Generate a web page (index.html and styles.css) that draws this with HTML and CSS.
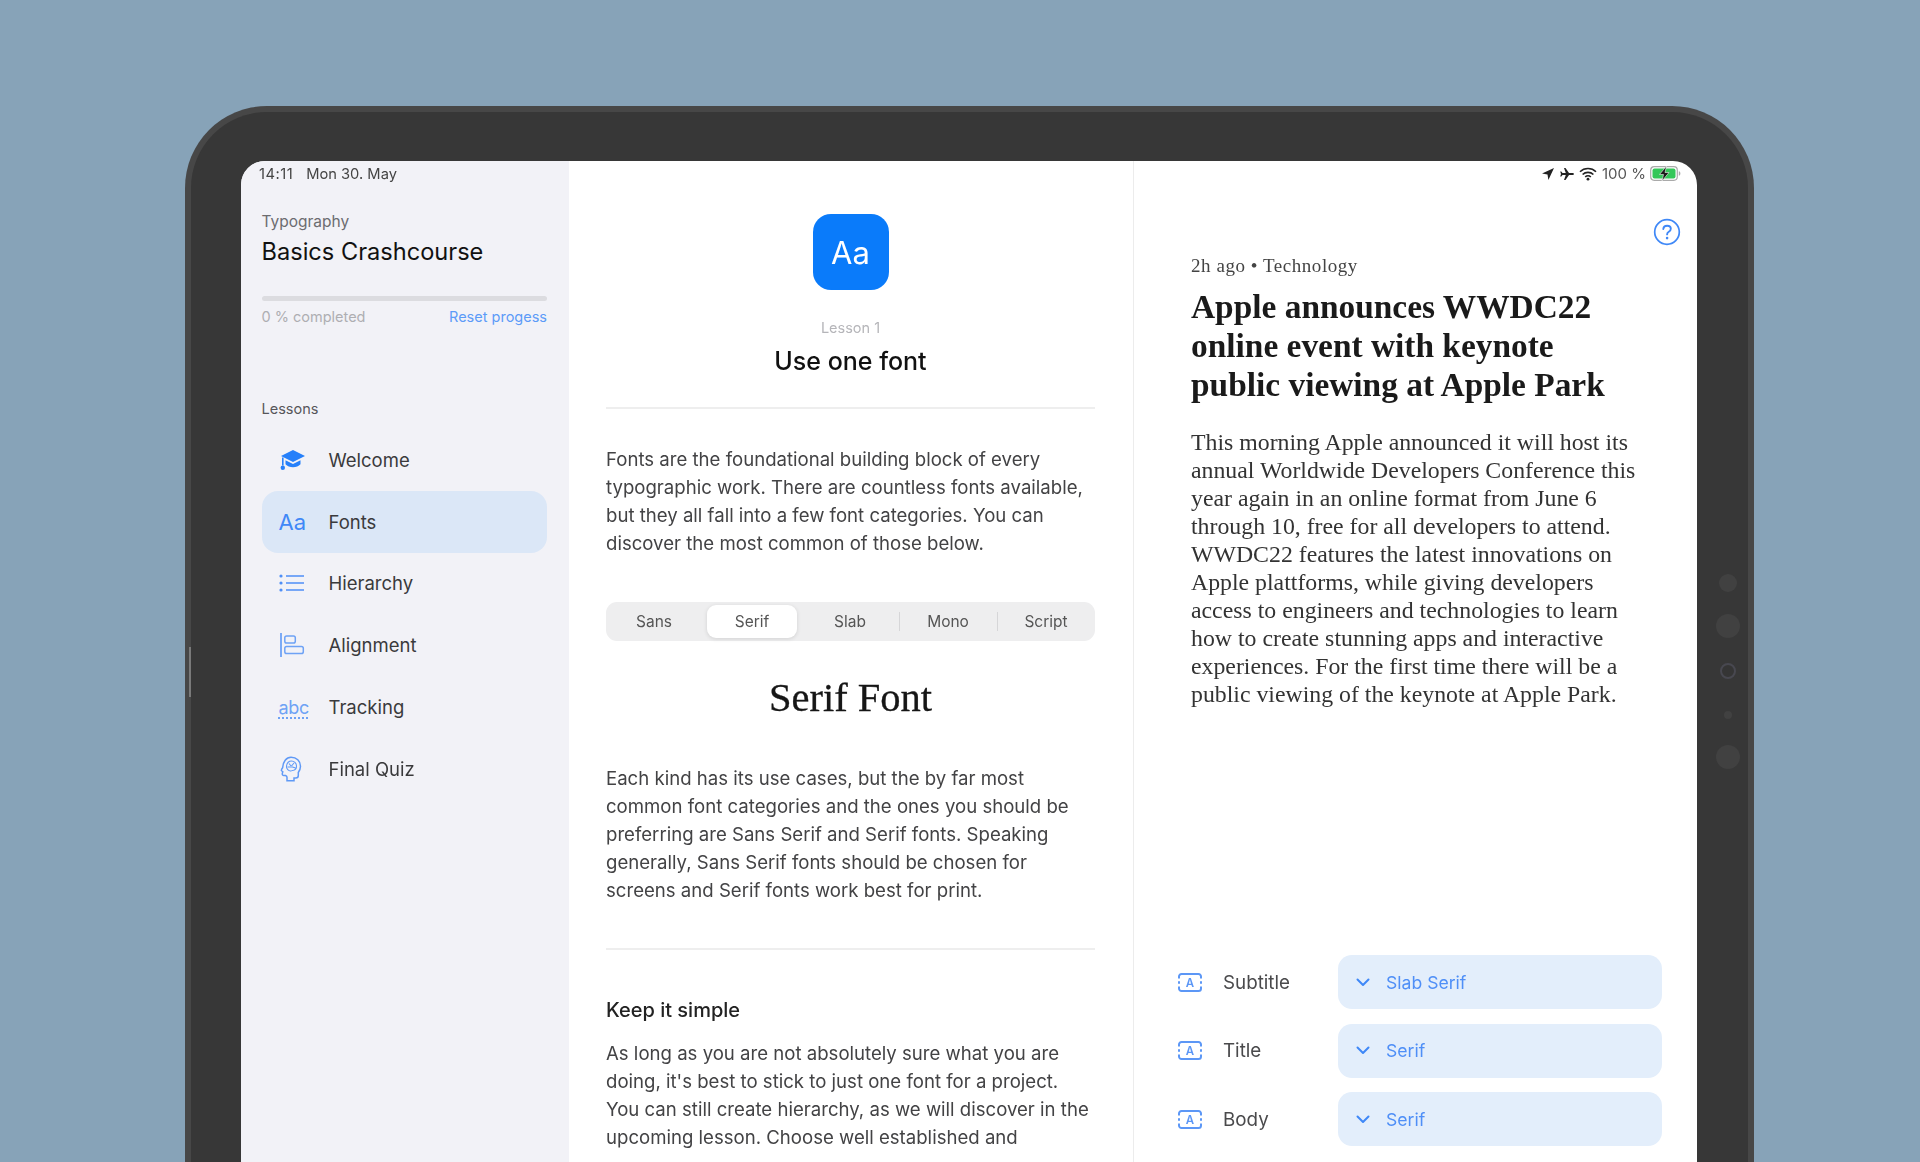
FILE: index.html
```html
<!DOCTYPE html>
<html lang="en">
<head>
<meta charset="utf-8">
<title>Typography Basics Crashcourse</title>
<link rel="stylesheet" href="styles.css">
</head>
<body>
<div class="device">
  <span class="edge-btn"></span>
  <div class="sensors">
    <span class="sensor s18"></span>
    <span class="sensor s24"></span>
    <span class="sensor s16 ring"></span>
    <span class="sensor s8"></span>
    <span class="sensor s24"></span>
  </div>
  <div class="screen">
    <div class="status">
      <div class="status-left"><span class="st-time">14:11</span><span>Mon 30. May</span></div>
      <div class="status-right">
        <svg class="st-ico" viewBox="0 0 14 14" width="14" height="14"><path d="M13 1 1 6.500l5.500.9.9 5.600z" fill="#222"/></svg>
        <svg class="st-ico" viewBox="0 0 16 14" width="16" height="14"><path d="M15 7c0-.7-1-1-2-1h-3L6.500 1H5l1.800 5H3.500L2.300 4.500H1.200L2 7l-.8 2.500h1.100L3.500 8h3.300L5 13h1.500L10 8h3c1 0 2-.3 2-1z" fill="#222"/></svg>
        <svg class="st-ico" viewBox="0 0 18 14" width="18" height="14"><g fill="none" stroke="#222" stroke-width="1.600"><path d="M1 4.800a11.500 11.500 0 0 1 16 0"/><path d="M3.600 7.500a7.800 7.800 0 0 1 10.800 0"/><path d="M6.200 10a4 4 0 0 1 5.600 0"/></g><circle cx="9" cy="12.200" r="1.400" fill="#222"/></svg>
        <span class="st-pct">100 %</span>
        <svg class="st-batt" viewBox="0 0 32 15" width="32" height="15"><rect x=".7" y=".7" width="26.600" height="13.600" rx="3.500" fill="none" stroke="#aaa" stroke-width="1.200"/><rect x="2.500" y="2.500" width="23" height="10" rx="2" fill="#34c759"/><path d="M28.800 5.200c1 .3 1.600 1.200 1.600 2.300s-.6 2-1.600 2.300z" fill="#aaa"/><path d="M16.500 0 9.500 8.500h4L12 15l7-8.500h-4z" fill="#1a1a1a" stroke="#f3f5f3" stroke-width=".6"/></svg>
      </div>
    </div>

    <aside class="sidebar">
      <div class="eyebrow">Typography</div>
      <h1 class="course">Basics Crashcourse</h1>
      <div class="track"></div>
      <div class="progress-row"><span class="done">0 % completed</span><span class="reset">Reset progess</span></div>
      <div class="lessons-label">Lessons</div>
      <nav class="lessons">
        <div class="lesson">
          <span class="lesson-ico"><svg viewBox="0 0 26 22" width="26" height="22"><path d="M14 1 2 7l12 6 12-6z" fill="#2680fa"/><path d="M6.500 11.200v4c1.800 2 4.500 3 7.500 3s5.700-1 7.500-3v-4L14 15z" fill="#2680fa"/><path d="M3.800 8.500v8" stroke="#2680fa" stroke-width="1.600"/><circle cx="3.800" cy="18.800" r="2.200" fill="#2680fa"/></svg></span>
          <span>Welcome</span>
        </div>
        <div class="lesson active">
          <span class="lesson-ico aa">Aa</span>
          <span>Fonts</span>
        </div>
        <div class="lesson">
          <span class="lesson-ico"><svg viewBox="0 0 26 20" width="26" height="20"><g fill="#4f8ff7"><circle cx="2" cy="3" r="1.600"/><circle cx="2" cy="10" r="1.600"/><circle cx="2" cy="17" r="1.600"/></g><path d="M7 3h18M7 10h18M7 17h18" stroke="#4f8ff7" stroke-width="1.600"/></svg></span>
          <span>Hierarchy</span>
        </div>
        <div class="lesson">
          <span class="lesson-ico"><svg viewBox="0 0 26 26" width="26" height="26"><path d="M2 1v24" stroke="#6ea2f5" stroke-width="1.800"/><rect x="5.800" y="4" width="10.500" height="7" rx="1.800" fill="none" stroke="#6ea2f5" stroke-width="1.500"/><rect x="5.800" y="14.500" width="18.500" height="7" rx="1.800" fill="none" stroke="#6ea2f5" stroke-width="1.500"/></svg></span>
          <span>Alignment</span>
        </div>
        <div class="lesson">
          <span class="lesson-ico"><span class="abc">abc</span></span>
          <span>Tracking</span>
        </div>
        <div class="lesson">
          <span class="lesson-ico"><svg viewBox="0 0 24 26" width="24" height="26"><path d="M12 1.200c5.500 0 9.500 3.800 9.500 9 0 2.800-1 4.500-2.200 6.300v3c0 1.500-1 2.500-2.500 2.500h-1.800v2.800H8v-3.500c0-1-.6-1.500-1.500-1.800H4.800c-1.100 0-1.800-.9-1.500-2l.5-1.800-1-.7c-.6-.4-.6-1-.2-1.600l1-1.700c.3-6 3.800-10.500 8.400-10.500z" fill="none" stroke="#5f99f6" stroke-width="1.500"/><path d="M7.500 10c.5-3 2.500-5 5-5s5 2 5 5-1.500 4-3 4.200c-1.500 0-1.500 1-3 .8s-4.500-2-4-5zM10 7.500l2 2.500m3-3-2.500 3m-4 1h6m-1 0 3 1" fill="none" stroke="#5f99f6" stroke-width="1.100"/></svg></span>
          <span>Final Quiz</span>
        </div>
      </nav>
    </aside>

    <main class="lesson-pane">
      <div class="hero-icon">Aa</div>
      <div class="lesson-no">Lesson 1</div>
      <h2 class="lesson-title">Use one font</h2>
      <hr class="rule rule-top">
      <p class="copy copy-a">Fonts are the foundational building block of every<br>typographic work. There are countless fonts available,<br>but they all fall into a few font categories. You can<br>discover the most common of those below.</p>
      <div class="segments">
        <div class="seg-grid">
          <span class="seg">Sans</span>
          <span class="seg selected">Serif</span>
          <span class="seg">Slab</span>
          <span class="seg sep">Mono</span>
          <span class="seg sep">Script</span>
        </div>
      </div>
      <h3 class="font-name">Serif Font</h3>
      <p class="copy copy-b">Each kind has its use cases, but the by far most<br>common font categories and the ones you should be<br>preferring are Sans Serif and Serif fonts. Speaking<br>generally, Sans Serif fonts should be chosen for<br>screens and Serif fonts work best for print.</p>
      <hr class="rule rule-mid">
      <h4 class="subhead">Keep it simple</h4>
      <p class="copy copy-c">As long as you are not absolutely sure what you are<br>doing, it's best to stick to just one font for a project.<br>You can still create hierarchy, as we will discover in the<br>upcoming lesson. Choose well established and</p>
    </main>

    <section class="preview">
      <svg class="help" viewBox="0 0 28 28" width="28" height="28"><circle cx="14" cy="14" r="12.300" fill="none" stroke="#3f88f7" stroke-width="1.700"/><path d="M10.300 11c.2-2.100 1.800-3.300 3.800-3.300 2.100 0 3.700 1.300 3.700 3.100 0 1.500-.9 2.300-2 3-1.100.7-1.700 1.200-1.700 2.600" fill="none" stroke="#3f88f7" stroke-width="1.900" stroke-linecap="round"/><circle cx="14.100" cy="20.100" r="1.300" fill="#3f88f7"/></svg>
      <article class="article">
        <div class="meta">2h ago • Technology</div>
        <h2 class="headline">Apple announces WWDC22<br>online event with keynote<br>public viewing at Apple Park</h2>
        <p class="article-body">This morning Apple announced it will host its<br>annual Worldwide Developers Conference this<br>year again in an online format from June 6<br>through 10, free for all developers to attend.<br>WWDC22 features the latest innovations on<br>Apple plattforms, while giving developers<br>access to engineers and technologies to learn<br>how to create stunning apps and interactive<br>experiences. For the first time there will be a<br>public viewing of the keynote at Apple Park.</p>
      </article>
      <div class="controls">
        <div class="control">
          <span class="tb"><svg viewBox="0 0 24 19" width="24" height="19"><path d="M1 5.500V3.500A2.500 2.500 0 0 1 3.500 1h17A2.500 2.500 0 0 1 23 3.500v2M1 13.500v2A2.500 2.500 0 0 0 3.500 18h17a2.500 2.500 0 0 0 2.500-2.500v-2M1 8.300v2.400M23 8.300v2.400" fill="none" stroke="#5c97f6" stroke-width="2"/><text x="12" y="13.800" text-anchor="middle" class="tb-a">A</text></svg></span>
          <span class="ctl-label">Subtitle</span>
          <div class="select"><svg viewBox="0 0 14 9" width="14" height="9"><path d="M1.500 1.500 7 7l5.500-5.500" fill="none" stroke="#3f88f7" stroke-width="2" stroke-linecap="round" stroke-linejoin="round"/></svg><span>Slab Serif</span></div>
        </div>
        <div class="control">
          <span class="tb"><svg viewBox="0 0 24 19" width="24" height="19"><path d="M1 5.500V3.500A2.500 2.500 0 0 1 3.500 1h17A2.500 2.500 0 0 1 23 3.500v2M1 13.500v2A2.500 2.500 0 0 0 3.500 18h17a2.500 2.500 0 0 0 2.500-2.500v-2M1 8.300v2.400M23 8.300v2.400" fill="none" stroke="#5c97f6" stroke-width="2"/><text x="12" y="13.800" text-anchor="middle" class="tb-a">A</text></svg></span>
          <span class="ctl-label">Title</span>
          <div class="select"><svg viewBox="0 0 14 9" width="14" height="9"><path d="M1.500 1.500 7 7l5.500-5.500" fill="none" stroke="#3f88f7" stroke-width="2" stroke-linecap="round" stroke-linejoin="round"/></svg><span>Serif</span></div>
        </div>
        <div class="control">
          <span class="tb"><svg viewBox="0 0 24 19" width="24" height="19"><path d="M1 5.500V3.500A2.500 2.500 0 0 1 3.500 1h17A2.500 2.500 0 0 1 23 3.500v2M1 13.500v2A2.500 2.500 0 0 0 3.500 18h17a2.500 2.500 0 0 0 2.500-2.500v-2M1 8.300v2.400M23 8.300v2.400" fill="none" stroke="#5c97f6" stroke-width="2"/><text x="12" y="13.800" text-anchor="middle" class="tb-a">A</text></svg></span>
          <span class="ctl-label">Body</span>
          <div class="select"><svg viewBox="0 0 14 9" width="14" height="9"><path d="M1.500 1.500 7 7l5.500-5.500" fill="none" stroke="#3f88f7" stroke-width="2" stroke-linecap="round" stroke-linejoin="round"/></svg><span>Serif</span></div>
        </div>
      </div>
    </section>
  </div>
</div>
</body>
</html>
```

FILE: styles.css
```css
* { box-sizing: border-box; }
html, body { margin: 0; height: 100%; }
body {
  background: #87a3b8;
  overflow: hidden;
  font-family: Inter, "Liberation Sans", sans-serif;
  padding-top: 106px;
}
h1, h2, h3, h4, p { margin: 0; font-weight: 400; }

.device {
  position: relative;
  width: 1569px;
  height: 1056px;
  margin-left: 185px;
  background: #373737;
  border: 6px solid #474747;
  border-bottom: 0;
  border-radius: 82px 82px 0 0;
  padding: 49px 51px 0 50px;
}
.edge-btn {
  position: absolute;
  left: -2px;
  top: 535px;
  width: 2px;
  height: 50px;
  background: #7a7a7a;
}
.sensors {
  position: absolute;
  right: 8px;
  top: 462px;
  width: 24px;
  display: flex;
  flex-direction: column;
  align-items: center;
}
.sensor { display: block; border-radius: 50%; background: #414141; }
.s18 { width: 18px; height: 18px; margin-bottom: 22px; }
.s24 { width: 24px; height: 24px; }
.s16 { width: 16px; height: 16px; margin: 25px 0 32px; }
.s8 { width: 8px; height: 8px; margin-bottom: 26px; }
.ring { background: #353535; border: 2px solid #484850; }

.screen {
  position: relative;
  height: 1001px;
  display: grid;
  grid-template-columns: 328px 565px 1fr;
  background: #fff;
  border-radius: 24px 24px 0 0;
  overflow: hidden;
  filter: blur(.4px);
}

.status {
  position: absolute;
  left: 0; right: 0; top: 0;
  height: 25px;
  padding: 0 15px 0 18px;
  display: flex;
  justify-content: space-between;
  align-items: center;
  font-size: 14.700px;
  color: #444;
}
.status-left { display: flex; gap: 13px; }
.st-time { letter-spacing: .5px; }
.status-right { display: flex; align-items: center; gap: 4px; }
.st-pct { margin: 0 0 0 1px; color: #555; font-size: 15px; }

.sidebar { background: #f2f2f7; padding: 51px 22px 0 20.500px; }
.eyebrow { font-size: 15.500px; line-height: 20px; color: #6c6c70; }
.course { font-size: 23.600px; line-height: 32px; margin-top: 4px; color: #111; font-weight: 400; }
.track { height: 5px; margin-top: 28px; border-radius: 3px; background: #dcdce0; }
.progress-row { display: flex; justify-content: space-between; font-size: 14.500px; line-height: 20px; margin-top: 6px; }
.done { color: #aeaeb2; }
.reset { color: #5c9bf8; }
.lessons-label { margin-top: 72px; font-size: 14.500px; line-height: 20px; color: #56565a; }
.lessons { margin-top: 10px; display: flex; flex-direction: column; }
.lesson {
  height: 61.800px;
  display: flex;
  align-items: center;
  font-size: 18.500px;
  color: #3a3a3c;
  border-radius: 16px;
}
.lesson.active { background: #dbe7f7; }
.lesson-ico { width: 67px; padding-left: 17px; display: flex; align-items: center; flex: none; }
.aa { font-size: 22px; color: #3f88f7; }
.abc { font-size: 18px; letter-spacing: -.3px; color: #6ea2f5; text-decoration: underline dotted #6ea2f5 2px; text-underline-offset: 4px; }

.lesson-pane { padding: 53px 38px 0 37px; border-right: 1px solid #ececec; overflow: hidden; }
.hero-icon {
  width: 76px; height: 76px;
  margin: 0 auto;
  display: flex; align-items: center; justify-content: center;
  background: #0a7bfa;
  border-radius: 18px;
  color: #fff;
  font-size: 31px;
}
.lesson-no { text-align: center; margin-top: 28px; font-size: 14.500px; line-height: 20px; color: #b5b5b9; }
.lesson-title { text-align: center; font-size: 25px; line-height: 34px; margin-top: 6px; color: #111; font-weight: 500; }
.rule { border: 0; height: 2px; background: #eeeeee; margin: 0; }
.rule-top { margin-top: 29px; }
.copy { font-size: 18.600px; line-height: 28px; color: #434345; }
.copy-a { margin-top: 36px; }
.segments { margin-top: 45px; height: 39px; background: #eeeeef; border-radius: 11px; padding: 3px 0; }
.seg-grid { display: grid; grid-template-columns: repeat(5, 98px); margin-left: -1px; height: 33px; }
.seg { display: flex; align-items: center; justify-content: center; font-size: 15.500px; color: #555; position: relative; }
.seg.selected { background: #fff; border-radius: 9px; margin: 0 4px; box-shadow: 0 1px 4px rgba(0,0,0,.12); }
.seg.sep::before { content: ""; position: absolute; left: 0; top: 7px; bottom: 7px; width: 1px; background: #d6d6d8; }
.font-name { text-align: center; font-family: "Liberation Serif", serif; font-size: 40.500px; line-height: 44px; margin-top: 35px; color: #161616; -webkit-text-stroke: .3px #161616; }
.copy-b { margin-top: 44px; }
.rule-mid { margin-top: 44px; }
.subhead { margin-top: 48px; font-size: 20px; line-height: 24px; font-weight: 500; color: #222; }
.copy-c { margin-top: 17px; }

.preview { position: relative; padding: 0 40px 0 57px; display: flex; flex-direction: column; }
.help { position: absolute; right: 16px; top: 57px; }
.article { padding-top: 94px; font-family: "Liberation Serif", serif; }
.meta { font-size: 19px; line-height: 22px; letter-spacing: .55px; color: #444; }
.headline { font-size: 33.400px; line-height: 39px; margin-top: 10px; font-weight: 700; color: #1a1a1a; }
.article-body { font-size: 23.800px; line-height: 28px; margin-top: 24px; color: #333; }

.controls { position: absolute; left: 44px; right: 35px; top: 794px; display: flex; flex-direction: column; gap: 14.600px; }
.control { display: flex; align-items: center; height: 54px; font-size: 18.800px; color: #4a4a4c; }
.tb { width: 45px; flex: none; display: flex; }
.tb-a { font-family: Inter, sans-serif; font-size: 11.500px; font-weight: 600; fill: #5c97f6; }
.ctl-label { width: 115px; flex: none; }
.select {
  flex: 1;
  height: 54px;
  padding-left: 18px;
  display: flex;
  align-items: center;
  gap: 16px;
  background: #e3eefb;
  border-radius: 14px;
  color: #4f8ff7;
  font-size: 17.600px;
}
```
